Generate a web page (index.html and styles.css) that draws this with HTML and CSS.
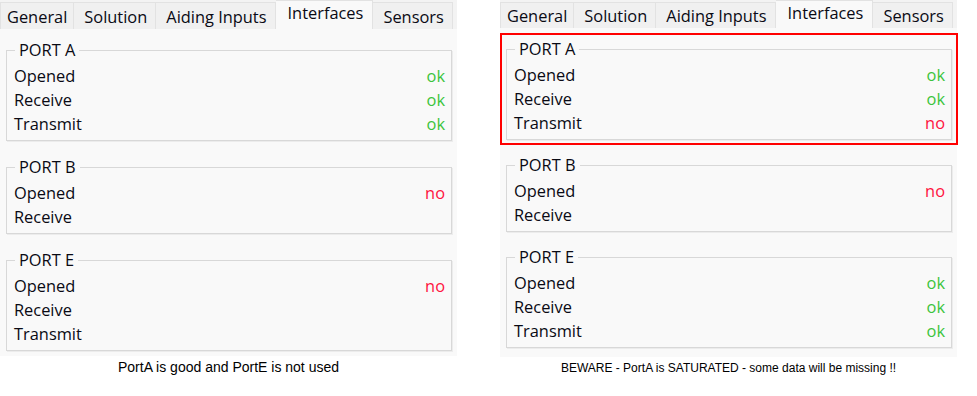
FILE: index.html
```html
<!DOCTYPE html>
<html>
<head>
<meta charset="utf-8">
<link rel="stylesheet" href="styles.css">
</head>
<body>
<div class="page">
  <div class="figure">
    <div class="panel">
      <div class="tabs">
        <div class="tab">General</div>
        <div class="tab">Solution</div>
        <div class="tab">Aiding Inputs</div>
        <div class="tab active">Interfaces</div>
        <div class="tab">Sensors</div>
      </div>
      <div class="content">
        <fieldset class="group">
          <legend>PORT A</legend>
          <div class="row"><span>Opened</span><span class="ok">ok</span></div>
          <div class="row"><span>Receive</span><span class="ok">ok</span></div>
          <div class="row"><span>Transmit</span><span class="ok">ok</span></div>
        </fieldset>
        <fieldset class="group">
          <legend>PORT B</legend>
          <div class="row"><span>Opened</span><span class="no">no</span></div>
          <div class="row"><span>Receive</span></div>
        </fieldset>
        <fieldset class="group">
          <legend>PORT E</legend>
          <div class="row"><span>Opened</span><span class="no">no</span></div>
          <div class="row"><span>Receive</span></div>
          <div class="row"><span>Transmit</span></div>
        </fieldset>
      </div>
    </div>
    <p class="caption">PortA is good and PortE is not used</p>
  </div>

  <div class="figure figure-right">
    <div class="panel">
      <div class="tabs">
        <div class="tab">General</div>
        <div class="tab">Solution</div>
        <div class="tab">Aiding Inputs</div>
        <div class="tab active">Interfaces</div>
        <div class="tab">Sensors</div>
      </div>
      <div class="content">
        <fieldset class="group">
          <legend>PORT A</legend>
          <div class="row"><span>Opened</span><span class="ok">ok</span></div>
          <div class="row"><span>Receive</span><span class="ok">ok</span></div>
          <div class="row"><span>Transmit</span><span class="no">no</span></div>
        </fieldset>
        <fieldset class="group">
          <legend>PORT B</legend>
          <div class="row"><span>Opened</span><span class="no">no</span></div>
          <div class="row"><span>Receive</span></div>
        </fieldset>
        <fieldset class="group">
          <legend>PORT E</legend>
          <div class="row"><span>Opened</span><span class="ok">ok</span></div>
          <div class="row"><span>Receive</span><span class="ok">ok</span></div>
          <div class="row"><span>Transmit</span><span class="ok">ok</span></div>
        </fieldset>
      </div>
      <div class="highlight"></div>
    </div>
    <p class="caption caption-small">BEWARE - PortA is SATURATED - some data will be missing !!</p>
  </div>
</div>
</body>
</html>
```

FILE: styles.css
```css
html, body {
  margin: 0;
  padding: 0;
  background: #ffffff;
}

.page {
  display: flex;
  gap: 43px;
  align-items: flex-start;
}

.figure {
  width: 457px;
  display: flex;
  flex-direction: column;
}

.panel {
  position: relative;
  background: #f9f9f9;
  font-family: "Open Sans", "Noto Sans", sans-serif;
  font-size: 16.4px;
  color: #0a0a14;
  padding-bottom: 5px;
}

.figure-right .panel {
  padding-bottom: 9px;
}

.tabs {
  display: flex;
  align-items: flex-end;
  height: 29px;
  background: #f3f3f3;
}

.figure-right .tabs {
  height: 28px;
}

.tab {
  height: 27px;
  line-height: 27px;
  padding: 0 8px 0 10px;
  background: #f0f0f0;
  border: 1px solid #e2e2e2;
  border-bottom: none;
  box-sizing: border-box;
  white-space: nowrap;
}

.tab:first-child {
  padding: 0 6px 0 6px;
}

.tab + .tab {
  border-left: none;
}

.figure-right .tab {
  height: 26px;
  line-height: 26px;
}

.tab.active {
  height: 29px;
  line-height: 24px;
  background: #f9f9f9;
  padding: 0 9px 0 12px;
}

.figure-right .tab.active {
  height: 28px;
  line-height: 23px;
}

.content {
  display: flex;
  flex-direction: column;
  gap: 15px;
  padding: 10px 5px 0 6px;
}

.figure-right .content {
  gap: 14px;
}

.group {
  margin: 0;
  padding: 3px 6px 4px 7px;
  border: 1px solid #d8d8d8;
  box-shadow: 1px 1px 0 #ececec;
  min-width: 0;
}

.group legend {
  margin-left: 1px;
  padding: 0 4px;
  line-height: 22px;
}

.row {
  display: flex;
  justify-content: space-between;
  height: 24px;
  line-height: 24px;
}

.ok {
  color: #3cc43c;
}

.no {
  color: #ff1440;
}

.caption {
  margin: 3px 0 0;
  text-align: center;
  font-family: "Liberation Sans", Arial, sans-serif;
  font-size: 14px;
  color: #000;
  line-height: 16px;
}

.caption-small {
  font-size: 12px;
}

.highlight {
  position: absolute;
  left: 0;
  top: 33px;
  width: 458px;
  height: 112px;
  border: 2px solid #ff0000;
  box-sizing: border-box;
}
```
